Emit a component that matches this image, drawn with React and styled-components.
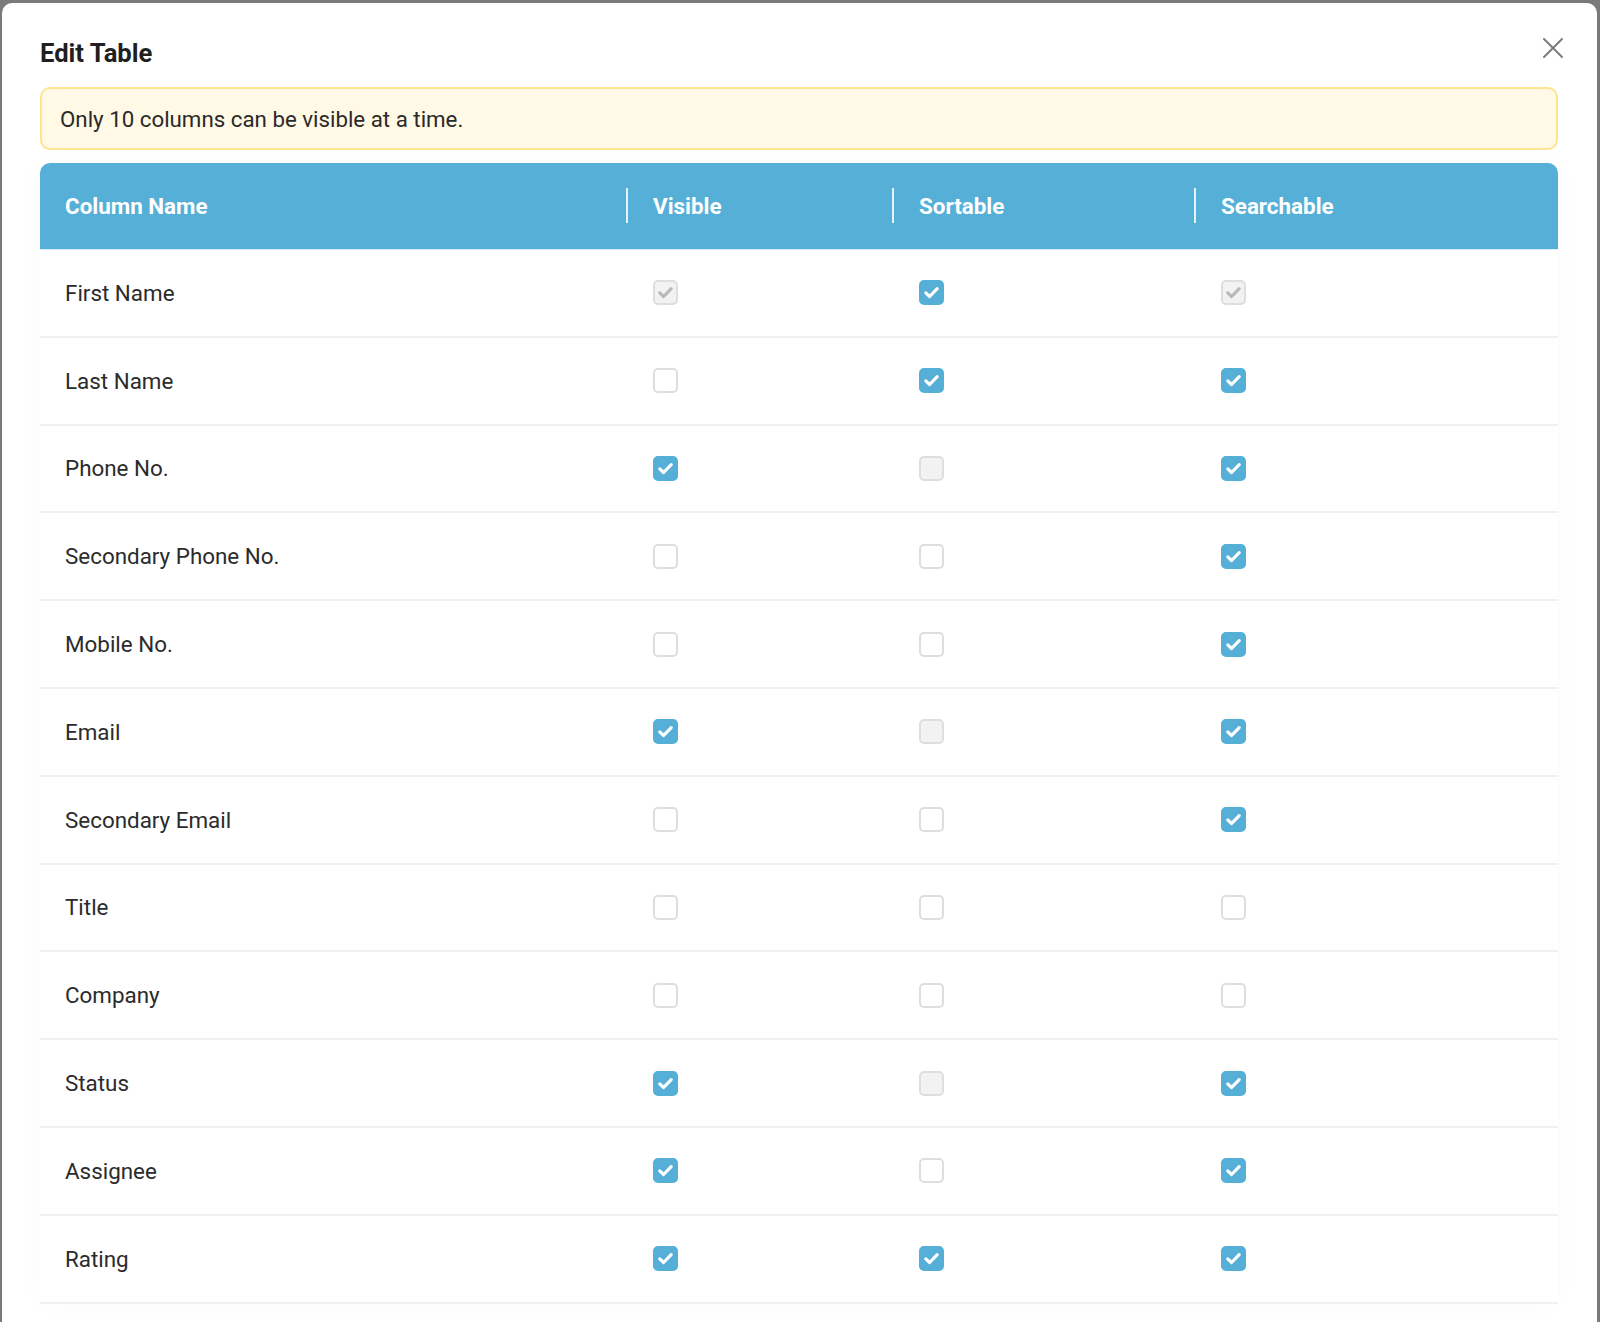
import React from 'react';
import styled, { createGlobalStyle } from 'styled-components';

const BLUE = '#55afd7';

const GlobalStyle = createGlobalStyle`
  html, body {
    margin: 0;
    padding: 0;
    background: #7a7a7a;
    font-family: Roboto, "Liberation Sans", Arial, sans-serif;
    overflow: hidden;
  }
`;

const ROWS = [
  { name: 'First Name', visible: 'lockedOn', sortable: 'on', searchable: 'lockedOn' },
  { name: 'Last Name', visible: 'off', sortable: 'on', searchable: 'on' },
  { name: 'Phone No.', visible: 'on', sortable: 'lockedOff', searchable: 'on' },
  { name: 'Secondary Phone No.', visible: 'off', sortable: 'off', searchable: 'on' },
  { name: 'Mobile No.', visible: 'off', sortable: 'off', searchable: 'on' },
  { name: 'Email', visible: 'on', sortable: 'lockedOff', searchable: 'on' },
  { name: 'Secondary Email', visible: 'off', sortable: 'off', searchable: 'on' },
  { name: 'Title', visible: 'off', sortable: 'off', searchable: 'off' },
  { name: 'Company', visible: 'off', sortable: 'off', searchable: 'off' },
  { name: 'Status', visible: 'on', sortable: 'lockedOff', searchable: 'on' },
  { name: 'Assignee', visible: 'on', sortable: 'off', searchable: 'on' },
  { name: 'Rating', visible: 'on', sortable: 'on', searchable: 'on' },
];

const Backdrop = styled.div`
  height: 1322px;
  padding: 3px 3px 0 2px;
  box-sizing: border-box;
`;

const Modal = styled.div`
  position: relative;
  height: 100%;
  background: #fff;
  border-radius: 10px 10px 0 0;
  padding: 33px 39px 0 38px;
  box-sizing: border-box;
  overflow: hidden;
`;

const Title = styled.h2`
  margin: 0 0 17px;
  font-size: 25.6px;
  line-height: 34px;
  font-weight: 700;
  color: #1f1f1f;
`;

const CloseButton = styled.button`
  position: absolute;
  top: 32px;
  right: 31px;
  width: 26px;
  height: 26px;
  padding: 0;
  border: 0;
  background: transparent;
  display: flex;
  align-items: center;
  justify-content: center;
  cursor: pointer;
`;

const Alert = styled.div`
  height: 63px;
  box-sizing: border-box;
  border: 2px solid #fde590;
  background: #fff9e6;
  border-radius: 10px;
  padding: 0 18px;
  display: flex;
  align-items: center;
  font-size: 22.3px;
  color: #2a2a2a;
  margin-bottom: 13px;
`;

const Table = styled.div`
  background: #fff;
  box-shadow: 0 0 24px rgba(0, 0, 0, 0.025);
`;

const Grid = styled.div`
  display: grid;
  grid-template-columns: 586px 266px 302px 1fr;
`;

const HeaderRow = styled(Grid)`
  height: 87px;
  box-sizing: border-box;
  background: ${BLUE};
  border-radius: 10px 10px 0 0;
  border-bottom: 1px solid #d8eef8;
`;

const HeadCell = styled.div`
  display: flex;
  align-items: center;
  padding-left: ${p => (p.first ? '25px' : '27px')};
  font-size: 22.4px;
  font-weight: 700;
  color: #fff;
  position: relative;

  &::before {
    content: '';
    display: ${p => (p.first ? 'none' : 'block')};
    position: absolute;
    left: 0;
    top: 25px;
    bottom: 26px;
    width: 2px;
    background: rgba(255, 255, 255, 0.85);
  }
`;

const BodyRow = styled(Grid)`
  height: 87.8px;
  box-sizing: border-box;
  border-bottom: 2px solid #f0f0f0;
`;

const Cell = styled.div`
  display: flex;
  align-items: center;
  padding-left: ${p => (p.first ? '25px' : '27px')};
  font-size: 22.4px;
  color: #2b2b2b;
`;

const Box = styled.span`
  width: 25px;
  height: 25px;
  box-sizing: border-box;
  border-radius: 5px;
  display: flex;
  align-items: center;
  justify-content: center;
  border: 2px solid ${p => (p.state === 'on' ? BLUE : '#dedede')};
  background: ${p =>
    p.state === 'on' ? BLUE : p.state.startsWith('locked') ? '#f2f2f2' : '#fff'};
`;

const Check = ({ color }) => (
  <svg width="19" height="19" viewBox="0 0 18 18" fill="none">
    <path
      d="M3.6 9.4 L7.2 12.8 L14.4 5.4"
      stroke={color}
      strokeWidth="3"
      strokeLinecap="round"
      strokeLinejoin="round"
    />
  </svg>
);

const Checkbox = ({ state }) => (
  <Box state={state}>
    {state === 'on' && <Check color="#fff" />}
    {state === 'lockedOn' && <Check color="#b9b9b9" />}
  </Box>
);

const App = () => (
  <>
    <GlobalStyle />
    <Backdrop>
      <Modal>
        <Title>Edit Table</Title>
        <CloseButton aria-label="Close">
          <svg width="22" height="22" viewBox="0 0 22 22">
            <path d="M2 2 L20 20 M20 2 L2 20" stroke="#7b7b7b" strokeWidth="2" strokeLinecap="round" />
          </svg>
        </CloseButton>
        <Alert>Only 10 columns can be visible at a time.</Alert>
        <Table>
          <HeaderRow>
            <HeadCell first>Column Name</HeadCell>
            <HeadCell>Visible</HeadCell>
            <HeadCell>Sortable</HeadCell>
            <HeadCell>Searchable</HeadCell>
          </HeaderRow>
          {ROWS.map(row => (
            <BodyRow key={row.name}>
              <Cell first>{row.name}</Cell>
              <Cell><Checkbox state={row.visible} /></Cell>
              <Cell><Checkbox state={row.sortable} /></Cell>
              <Cell><Checkbox state={row.searchable} /></Cell>
            </BodyRow>
          ))}
        </Table>
      </Modal>
    </Backdrop>
  </>
);

export default App;
